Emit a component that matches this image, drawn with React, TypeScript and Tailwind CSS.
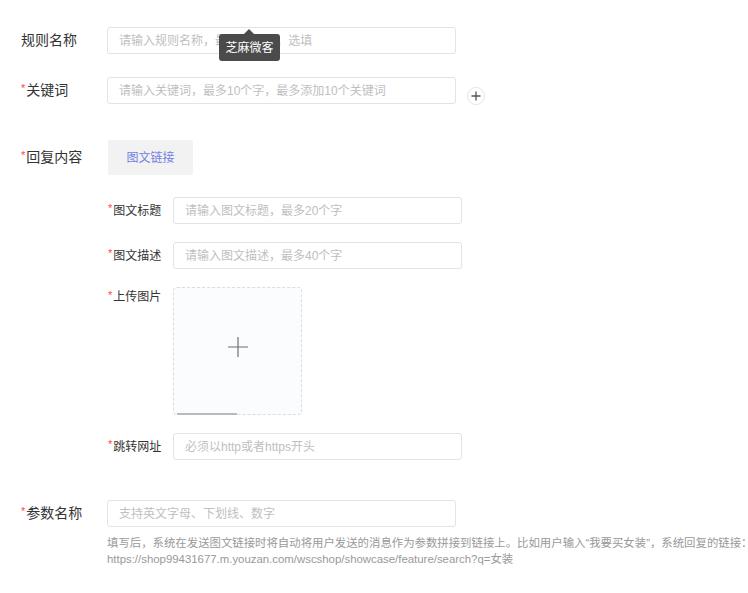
import React from "react";

const font = { fontFamily: '"Liberation Sans", "Noto Sans CJK SC", sans-serif' };

function Star() {
  return <span className="text-[#f44] text-[11px] mr-[1px] relative top-[-2px]">*</span>;
}

function Input({ placeholder, w }: { placeholder: string; w: string }) {
  return (
    <div
      className={`${w} h-[27px] border border-[#e3e3e3] rounded-[3px] bg-white flex items-center px-[11px] text-[12px] text-[#c0c0c0] whitespace-nowrap overflow-hidden`}
    >
      {placeholder}
    </div>
  );
}

export default function App() {
  return (
    <div className="w-[748px] h-[593px] bg-white relative overflow-hidden text-[#333]" style={font}>
      <div className="pl-[21px] pt-[27px] flex flex-col">
        {/* 规则名称 */}
        <div className="flex items-center h-[27px]">
          <div className="w-[86px] text-[14px]">规则名称</div>
          <Input w="w-[349px]" placeholder="请输入规则名称，最多10个字，选填" />
        </div>

        {/* 关键词 */}
        <div className="flex items-center h-[27px] mt-[23px]">
          <div className="w-[86px] text-[14px] flex items-center">
            <Star />
            关键词
          </div>
          <Input w="w-[349px]" placeholder="请输入关键词，最多10个字，最多添加10个关键词" />
          <div className="ml-[11px] mt-[10px] w-[18px] h-[18px] rounded-full border border-[#e5e5e5] flex items-center justify-center">
            <svg width="10" height="10" viewBox="0 0 10 10">
              <path d="M5 0.5v9M0.5 5h9" stroke="#555" strokeWidth="1.3" />
            </svg>
          </div>
        </div>

        {/* 回复内容 */}
        <div className="flex items-center h-[35px] mt-[36px]">
          <div className="w-[87px] text-[14px] flex items-center">
            <Star />
            回复内容
          </div>
          <div className="w-[85px] h-[35px] bg-[#f2f2f2] rounded-[2px] flex items-center justify-center text-[12px] text-[#7380e4]">
            图文链接
          </div>
        </div>

        <div className="pl-[87px] flex flex-col">
          <div className="flex items-center h-[27px] mt-[22px]">
            <div className="w-[65px] text-[12px] flex items-center">
              <Star />
              图文标题
            </div>
            <Input w="w-[289px]" placeholder="请输入图文标题，最多20个字" />
          </div>
          <div className="flex items-center h-[27px] mt-[18px]">
            <div className="w-[65px] text-[12px] flex items-center">
              <Star />
              图文描述
            </div>
            <Input w="w-[289px]" placeholder="请输入图文描述，最多40个字" />
          </div>
          <div className="flex mt-[18px]">
            <div className="w-[65px] text-[12px] flex items-center h-[20px]">
              <Star />
              上传图片
            </div>
            <div className="relative w-[129px] h-[128px] border border-dashed border-[#dcdcdc] rounded-[4px] bg-[#fafcfe] flex items-center justify-center">
              <svg width="22" height="22" viewBox="0 0 22 22" className="mb-[9px]">
                <path d="M11 1v20M1 11h20" stroke="#6f6f6f" strokeWidth="1.2" />
              </svg>
              <div className="absolute left-[3px] bottom-[-1px] w-[60px] h-[2px] bg-[#b9b9b9]" />
            </div>
          </div>
          <div className="flex items-center h-[27px] mt-[18px]">
            <div className="w-[65px] text-[12px] flex items-center">
              <Star />
              跳转网址
            </div>
            <Input w="w-[289px]" placeholder="必须以http或者https开头" />
          </div>
        </div>

        {/* 参数名称 */}
        <div className="flex items-center h-[27px] mt-[40px]">
          <div className="w-[86px] text-[14px] flex items-center">
            <Star />
            参数名称
          </div>
          <Input w="w-[349px]" placeholder="支持英文字母、下划线、数字" />
        </div>
        <div className="pl-[86px] mt-[8px] text-[11.4px] leading-[16px] text-[#999] whitespace-nowrap">
          <div>填写后，系统在发送图文链接时将自动将用户发送的消息作为参数拼接到链接上。比如用户输入“我要买女装”，系统回复的链接：</div>
          <div>https://shop99431677.m.youzan.com/wscshop/showcase/feature/search?q=女装</div>
        </div>
      </div>

      {/* tooltip */}
      <div className="absolute left-[219px] top-[34px] w-[61px] h-[27px] bg-[#4b4b4b] rounded-[3px] flex items-center justify-center text-[12px] text-white">
        芝麻微客
        <div className="absolute left-[25px] top-[-5px] w-0 h-0 border-l-[5px] border-r-[5px] border-b-[5px] border-l-transparent border-r-transparent border-b-[#4b4b4b]" />
      </div>
    </div>
  );
}
